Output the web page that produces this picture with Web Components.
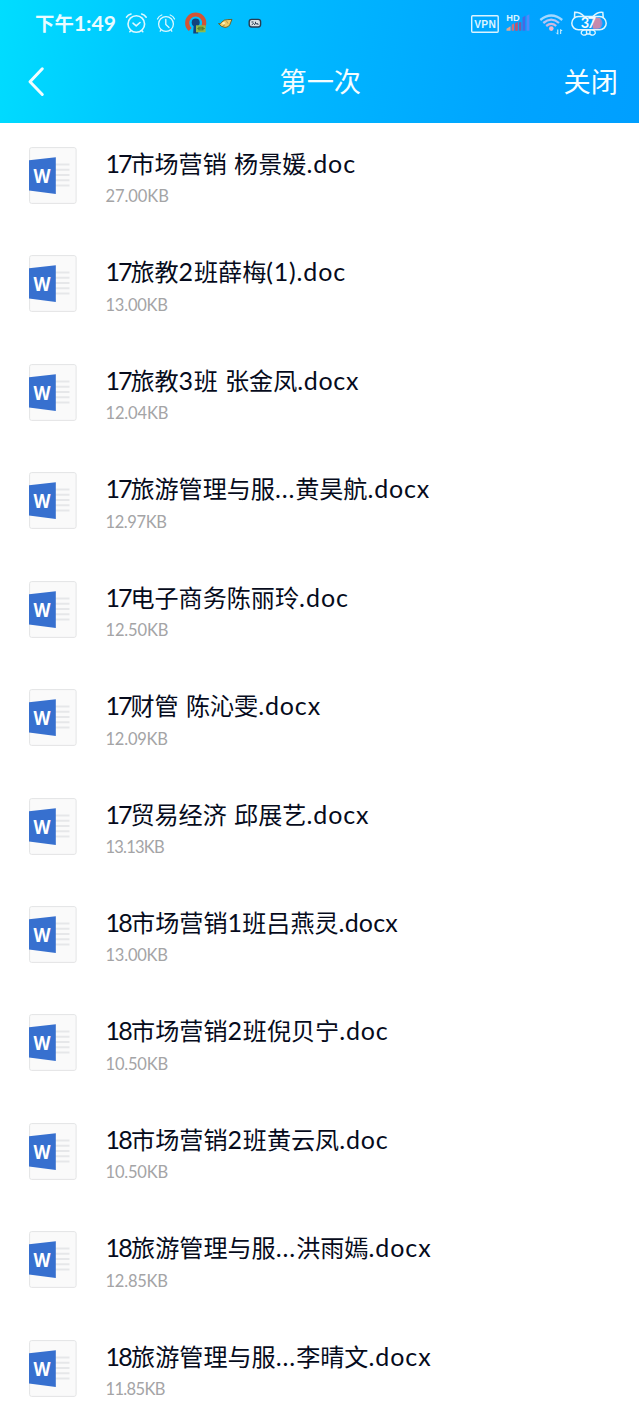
<!DOCTYPE html>
<html lang="zh-CN">
<head>
<meta charset="utf-8">
<title>第一次</title>
<style>
html,body{margin:0;background:#fff}
body{width:639px;height:1422px;overflow:hidden;font-family:Lato,"Noto Sans CJK SC",sans-serif}
</style>
</head>
<body>
<file-page></file-page>
<script>
class FitText extends HTMLElement {
  connectedCallback() {
    const root = this.attachShadow({ mode: 'open' });
    const text = this.getAttribute('text');
    root.innerHTML = '<style>:host{display:block;white-space:pre}span{white-space:pre}.c{font-size:var(--cjk,1em)}</style><div><span id="all"></span></div>';
    const all = root.getElementById('all');
    const lead = +this.getAttribute('lead');
    const runs = text.match(/[\u4e00-\u9fff]+|[^\u4e00-\u9fff]+/g);
    let count = 0;
    runs.forEach((r, i) => {
      const s = document.createElement('span');
      s.textContent = r;
      all.append(s);
      if (/[\u4e00-\u9fff]/.test(r)) s.className = 'c';
      else if (lead && i === 0) {
        s.style.letterSpacing = (lead - s.getBoundingClientRect().width) / r.length + 'px';
      } else { s.className = 'l'; count += r.length; }
    });
    const target = +this.getAttribute('fit');
    if (target && count) {
      const gap = (target - all.getBoundingClientRect().width) / count;
      root.querySelectorAll('.l').forEach(s => s.style.letterSpacing = gap + 'px');
    }
  }
}
customElements.define('fit-text', FitText);

class WordIcon extends HTMLElement {
  connectedCallback() {
    this.attachShadow({ mode: 'open' }).innerHTML = `
<style>:host{display:block;width:48px;height:57px;flex:none}svg{display:block}</style>
<svg width="48" height="57" viewBox="0 0 48 57">
<rect x=".6" y=".6" width="46.5" height="55.8" rx="2" fill="#fafafa" stroke="#e3e4e5" stroke-width="1"/>
<path d="M26 17.5h14.5M26 22.7h14.5M26 28h14.5M26 33.2h14.5M26 38.4h14.5" stroke="#e6e7e9" stroke-width="2"/>
<path d="M0 13.2L26.8 10.2V46.9L0 43.6Z" fill="#3770cf"/>
<text x="13" y="35.8" text-anchor="middle" textLength="17" lengthAdjust="spacingAndGlyphs" font-family="Open Sans,sans-serif" font-weight="700" font-size="20" fill="#fff">W</text>
</svg>`;
  }
}
customElements.define('word-icon', WordIcon);

class FileRow extends HTMLElement {
  connectedCallback() {
    const a = n => this.getAttribute(n);
    this.attachShadow({ mode: 'open' }).innerHTML = `
<style>
:host{display:flex;box-sizing:border-box;height:108.43px;padding:24px 0 0 29px;gap:29px}
word-icon{margin-right:-.5px}
.name{--cjk:24.1px;font-size:25px;line-height:34px;height:34px;color:#060b1c;margin-top:-1px}
.size{font-size:16.5px;line-height:22px;color:#a4a4a6;margin-top:5.4px}
</style>
<word-icon></word-icon>
<div><fit-text class="name" text="${a('name')}" fit="${a('w')}" lead="${a('name').startsWith('18') ? 25.6 : 24.9}"></fit-text><fit-text class="size" text="${a('size')}" fit="${a('sw')}"></fit-text></div>`;
  }
}
customElements.define('file-row', FileRow);

class StatusBar extends HTMLElement {
  connectedCallback() {
    this.attachShadow({ mode: 'open' }).innerHTML = `
<style>
:host{display:flex;box-sizing:border-box;height:45px;padding:1px 31px 0 35px;align-items:center;justify-content:space-between;color:#e9fbff}
.time{font-size:21px;line-height:30px;font-weight:700;--cjk:19.4px;width:82px}
.left,.right{display:flex;align-items:center}
svg{display:block}
</style>
<div class="left">
<fit-text class="time" text="下午1:49" fit="81"></fit-text>
<svg width="150" height="34" viewBox="120 6 150 34" style="margin-left:3px" fill="none">
<g stroke="#ddf8ff" stroke-linecap="round" stroke-linejoin="round">
<circle cx="136.3" cy="24" r="8.3" stroke-width="1.6"/><path d="M126.5 17.2Q128 14.7 131 14M141.7 14Q144.5 14.7 146.2 17.2M130.8 30.7l-1 1M141.8 30.7l1 1" stroke-width="1.6"/><path d="M133 23.2l3.2 2.7 3.8-3.4" stroke-width="1.6"/>
<circle cx="166" cy="24" r="7.4" stroke-width="1.3"/><path d="M157.5 19Q158.7 16 161.8 15M170.2 15Q173.3 16 174.5 19M161 30l-.8 1.2M171 30l.8 1.2" stroke-width="1.3"/><path d="M165.8 19.5V24.5L169 27.5" stroke-width="1.3"/>
</g>
<path d="M190.2 29.5A8.5 8.5 0 1 1 201.2 29.5" stroke="#d35434" stroke-width="4.2"/>
<circle cx="195.7" cy="22.6" r="4" fill="#12437d"/><path d="M193.7 24h4l.5 9.5h-5Z" fill="#12437d"/>
<path d="M196 25.3h9.6v7H196Z" fill="#91b84a"/><rect x="198.8" y="27.2" width="4.2" height="2.7" stroke="#47722d" stroke-width=".8"/><path d="M197 28.5h8" stroke="#47722d" stroke-width=".6"/>
<path d="M218.5 23.6q2 .8 2.8-1 2.7-3.3 6.5-3l4.2-.2-1.5 3.5q-1 4.3-5.5 4.5-3.8-.2-6.5-3.8Z" fill="#efcd69" stroke="#66571f" stroke-width=".9"/><circle cx="223.6" cy="23.3" r="1.3" fill="#fff1c0"/><path d="M226.5 21l1.5 2.6M223 25.5l2-.5" stroke="#a98547" stroke-width=".8"/>
<rect x="249.2" y="19.4" width="11.4" height="7.6" rx="2.4" fill="#d9e2e6" stroke="#293b50" stroke-width="1.4"/><path d="M251.5 22h2M251.7 24.8l1.8-1.3 1.5 1.3M255.5 21.8v2h2.5v1" stroke="#293b50" stroke-width="1"/>
</svg></div>
<svg class="right" width="138" height="36" viewBox="470 4 138 36" fill="none">
<rect x="471.7" y="14.7" width="26.5" height="16.6" rx="1" stroke="#dcf4ff" stroke-width="1.4"/>
<text x="474.2" y="27" textLength="21.6" fill="#dcf4ff" font-family="Liberation Sans,sans-serif" font-size="10.2" font-weight="700">VPN</text>
<text x="506.2" y="20" textLength="13.4" lengthAdjust="spacingAndGlyphs" fill="#dcf4ff" font-family="Liberation Sans,sans-serif" font-size="9" font-weight="700">HD</text>
<path d="M506.5 29.7v-2l4-2.5v4.5Z" fill="#dba895"/><path d="M511.7 29.7v-6l2.3-1.3v7.3Z" fill="#cf6f7d"/><path d="M515.1 29.7v-7.2l2.7-1.7v8.9Z" fill="#bd5272"/><path d="M519 29.7V21.2h2.3v8.5Z" fill="#785ba9"/><path d="M522.5 29.7V16.5l2.8-1.8v15Z" fill="#4868e3"/><path d="M526.6 29.7v-15l2.8-1.5v16.5Z" fill="#5289fa"/>
<g stroke-width="2.3"><path d="M540.3 19Q551.3 10 562.2 19" stroke="#a3d8ff"/><path d="M543.3 22Q551.3 15.3 559 22" stroke="#b6c5f4"/><path d="M546.2 25Q551.3 20.7 556.2 25" stroke="#cbb8e1"/></g><circle cx="551.3" cy="27.6" r="2.3" fill="#f1b7c9"/>
<path d="M557.8 28.5v4.7l-1.5-1.5M560.7 33v-4.5l1.5 1.5" stroke="#dff5ff"/>
<path d="M591.5 16.4h6.3a6 6 0 0 1 0 11.7h-4.5Z" fill="#8a8bd7"/><path d="M594.5 17h5.8v10.3H592.5Z" fill="#c68bad"/>
<rect x="571.8" y="15.6" width="34.4" height="13.2" rx="6.6" stroke="#dff5ff" stroke-width="1.5"/>
<path d="M574.5 17l.2-5.8q5.3-.3 9.5 4.2M593 15.5q4.5-4.8 9.8-4.1l.5 5.8" stroke="#dff5ff" stroke-width="1.5"/>
<path d="M586.5 29q-5.5-.5-5.3 3.3 1.7 3.3 5.5.8ZM590 29q5.5-.5 5.3 3.3-1.7 3.3-5.5.8ZM586.5 29h3.5v4h-3.5Z" stroke="#dff5ff" stroke-width="1.3"/>
<text x="580.8" y="27.4" textLength="15" fill="#f4fbff" font-family="Lato,sans-serif" font-size="14.5" font-weight="700">37</text>
</svg>`;
  }
}
customElements.define('status-bar', StatusBar);

class NavBar extends HTMLElement {
  connectedCallback() {
    this.attachShadow({ mode: 'open' }).innerHTML = `
<style>
:host{display:grid;grid-template-columns:1fr auto 1fr;box-sizing:border-box;height:74px;align-items:center;padding:0 21px 0 26.5px;color:#f5fdff;font-size:27.2px;line-height:40px}
.close{justify-self:end}.title{margin-left:-4px}svg{display:block}
</style>
<svg width="20" height="32" viewBox="0 0 20 32" fill="none"><path d="M15.3 2.8L3 15.8 15.3 28.5" stroke="#f1fdff" stroke-width="3" stroke-linecap="round" stroke-linejoin="round"/></svg>
<div class="title">第一次</div><div class="close">关闭</div>`;
  }
}
customElements.define('nav-bar', NavBar);

const files = [
  ['17市场营销 杨景媛.doc', 356, '27.00KB', 168.3],
  ['17旅教2班薛梅(1).doc', 346, '13.00KB', 167.3],
  ['17旅教3班 张金凤.docx', 359, '12.04KB', 167.8],
  ['17旅游管理与服...黄昊航.docx', 430, '12.97KB', 166],
  ['17电子商务陈丽玲.doc', 349, '12.50KB', 167.8],
  ['17财管 陈沁雯.docx', 321, '12.09KB', 167.3],
  ['17贸易经济 邱展艺.docx', 369.5, '13.13KB', 163.3],
  ['18市场营销1班吕燕灵.docx', 398, '13.00KB', 167.3],
  ['18市场营销2班倪贝宁.doc', 388.5, '10.50KB', 167.5],
  ['18市场营销2班黄云凤.doc', 388.5, '10.50KB', 167.5],
  ['18旅游管理与服...洪雨嫣.docx', 431.5, '12.85KB', 167.3],
  ['18旅游管理与服...李晴文.docx', 431.5, '11.85KB', 164.3]
];

class FilePage extends HTMLElement {
  connectedCallback() {
    this.attachShadow({ mode: 'open' }).innerHTML = `
<style>
:host{display:block;width:639px;height:1422px;overflow:hidden;background:#fff}
header{height:123px;background:linear-gradient(100deg,#00ddff 0%,#00c8ff 22%,#00b4ff 52%,#00a4ff 80%,#009fff 100%)}
</style>
<header><status-bar></status-bar><nav-bar></nav-bar></header>
<main>${files.map(f => `<file-row name="${f[0]}" w="${f[1] - 105.5}" size="${f[2]}" sw="${f[3] - 105}"></file-row>`).join('')}</main>`;
  }
}
customElements.define('file-page', FilePage);
</script>
</body>
</html>
